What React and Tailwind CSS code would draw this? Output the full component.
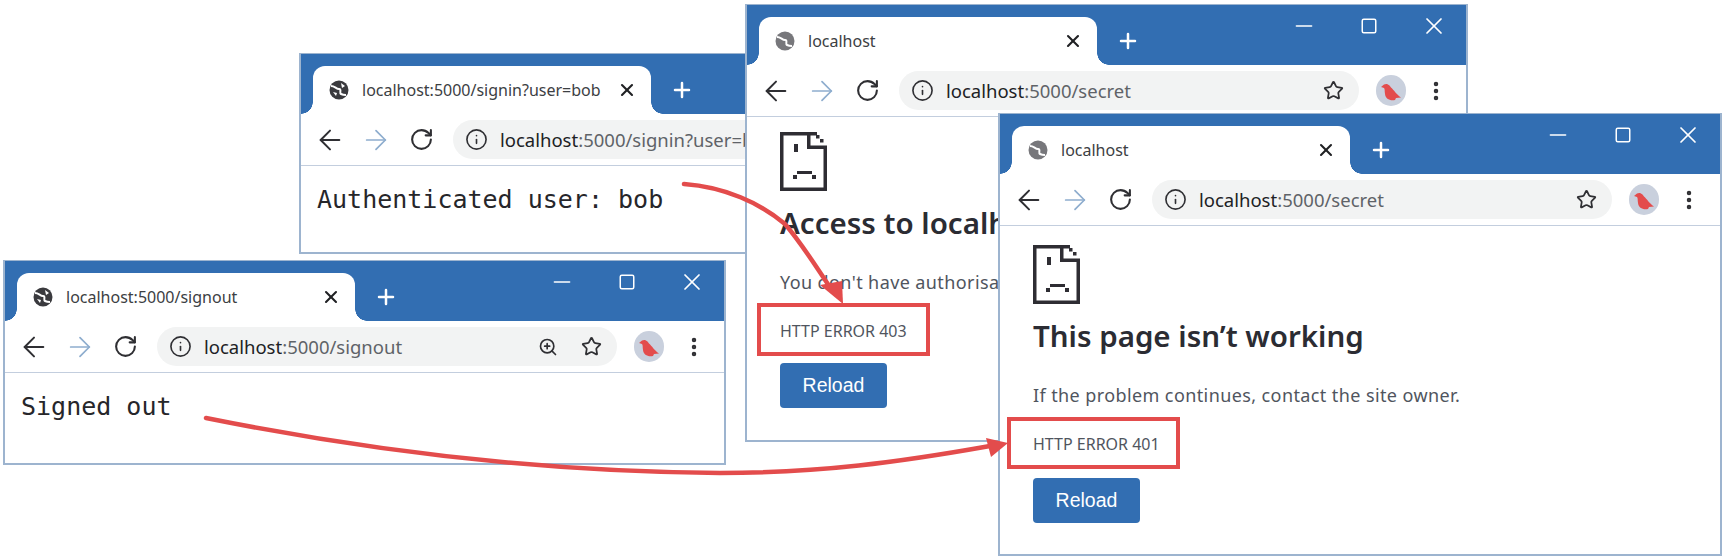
import React from "react";
import { ArrowLeft, ArrowRight, EllipsisVertical, Info, Minus, Plus, RotateCw, Square, Star, X, ZoomIn } from "lucide-react";

// Globe favicon, dark once a page has loaded and grey while it errors
function Globe({ dark }) {
  return (
    <svg width="20" height="20" viewBox="0 0 20 20" className="shrink-0">
      <circle cx="10" cy="10" r="9.5" fill={dark ? "#3a3a3e" : "#77777b"} />
      <path d="M2 6 C6 6 7 9 10 9 C13 9 10 13 12 14 C14 15 15 15 17 15" fill="none" stroke="#fff" strokeWidth="2" />
      {dark && <path d="M12 3 L16 6 L13 8 Z M4 12 L8 13 L7 16 Z" fill="#fff" />}
    </svg>
  );
}

function Avatar() {
  return (
    <div className="ml-[17px] w-[30px] h-[31px] shrink-0 rounded-full bg-[#c9d0dd] flex items-center justify-center">
      <svg width="30" height="31" viewBox="0 0 30 31">
        <path d="M5 12 L8 9.500 C10 8.500 12 9 13.500 10.500 L15 12.500 C18 15 20 19 25 22.500 L20 23 L19 25 C14 26 9.500 24 9 19 C8.500 16 9 14 8 13 Z" fill="#e34c4c" />
      </svg>
    </div>
  );
}

// Pixel style "sad page" that Chrome shows on its error pages
function SadPage() {
  return (
    <svg width="47" height="59" viewBox="0 0 47 59" fill="#2e2d33" className="block">
      <rect x="0" y="0" width="3.500" height="59" />
      <rect x="0" y="0" width="37" height="3.500" />
      <rect x="0" y="55.500" width="47" height="3.500" />
      <rect x="43.500" y="14" width="3.500" height="45" />
      <rect x="27" y="0" width="3.500" height="17" />
      <rect x="27" y="13.500" width="20" height="3.500" />
      <rect x="36" y="3" width="3.500" height="3.500" />
      <rect x="40" y="7" width="3.500" height="3.500" />
      <rect x="14" y="12" width="4" height="8" />
      <rect x="13" y="43" width="4" height="4" />
      <rect x="32" y="43" width="4" height="4" />
      <rect x="17" y="39" width="15" height="3" />
    </svg>
  );
}

function BrowserWindow({ title, url, dark, zoom, className, children }) {
  const [host, ...rest] = url.split(":");
  return (
    <div className={`absolute flex flex-col overflow-hidden bg-white border-x-2 border-b-2 border-t border-[#9db4cf] ${className}`}>
      {/* Tab strip */}
      <div className="h-[60px] shrink-0 bg-[#326eb2] flex items-end pl-[12px]">
        <div className="relative w-[338px] h-[48px] bg-white rounded-t-[12px] flex items-center pl-[16px] pr-[14px]">
          <div className="absolute -left-[12px] bottom-0 w-[12px] h-[12px] bg-[radial-gradient(circle_at_0_0,#326eb2_11.500px,#fff_12px)]" />
          <div className="absolute -right-[12px] bottom-0 w-[12px] h-[12px] bg-[radial-gradient(circle_at_100%_0,#326eb2_11.500px,#fff_12px)]" />
          <Globe dark={dark} />
          <span className="ml-[13px] text-[16px] text-[#3c4043] whitespace-nowrap">{title}</span>
          <X size={20} strokeWidth={2.5} className="ml-auto shrink-0 text-[#202124]" />
        </div>
        <div className="h-[48px] flex items-center ml-[19px]">
          <Plus size={24} strokeWidth={2.5} className="text-white" />
        </div>
        <div className="self-start ml-auto mt-[7px] mr-[18px] flex gap-[37px] text-white">
          <div className="w-[28px] h-[28px] flex items-center justify-center">
            <Minus size={26} strokeWidth={1.500} />
          </div>
          <div className="w-[28px] h-[28px] flex items-center justify-center">
            <Square size={18} strokeWidth={2} />
          </div>
          <div className="w-[28px] h-[28px] flex items-center justify-center">
            <X size={28} strokeWidth={1.500} />
          </div>
        </div>
      </div>
      {/* Toolbar */}
      <div className="h-[52px] shrink-0 flex items-center pl-[13px] border-b border-[#c3cede]">
        <ArrowLeft size={32} strokeWidth={1.500} className="shrink-0 text-[#2f2f33]" />
        <ArrowRight size={32} strokeWidth={1.300} className="ml-[14px] shrink-0 text-[#8eadce]" />
        <RotateCw size={25} strokeWidth={2} className="ml-[16.500px] shrink-0 text-[#2f2f33]" />
        <div className="ml-[19.500px] w-[460px] h-[39px] shrink-0 rounded-full bg-[#f2f3f3] flex items-center pl-[11.500px] pr-[15px]">
          <Info size={23} strokeWidth={1.700} className="shrink-0 text-[#2f2f33]" />
          <span className="ml-[12.500px] text-[18.500px] text-[#5f6368] whitespace-nowrap">
            <span className="text-[#202124]">{host}</span>:{rest.join(":")}
          </span>
          {zoom && <ZoomIn size={20} strokeWidth={2} className="ml-auto shrink-0 text-[#2f2f33]" />}
          <Star size={21} strokeWidth={2} className={`${zoom ? "ml-[23px]" : "ml-auto"} shrink-0 text-[#2f2f33]`} />
        </div>
        <Avatar />
        <EllipsisVertical size={24} strokeWidth={2.500} className="ml-[18px] shrink-0 text-[#2f2f33]" />
      </div>
      {children}
    </div>
  );
}

function MonoPage({ children }) {
  return (
    <p className="pl-[16px] pt-[19px] font-['DejaVu_Sans_Mono',monospace] text-[25px] leading-[30px] text-[#26262a] whitespace-nowrap">
      {children}
    </p>
  );
}

function ErrorPage({ heading, message, code, padTop, boxClass, buttonGap }) {
  return (
    <div className={`pl-[33px] ${padTop}`}>
      <SadPage />
      <h1 className="mt-[12px] text-[29.500px] leading-[40px] font-semibold text-[#2b2c33] whitespace-nowrap">{heading}</h1>
      <p className="mt-[27px] text-[18px] tracking-[0.4px] leading-[24px] text-[#50555e] whitespace-nowrap">{message}</p>
      <div className="relative mt-[27px] w-fit text-[16px] leading-[20px] text-[#50555e] whitespace-nowrap">
        {code}
        <div className={`absolute border-[4px] border-[#e34c4c] ${boxClass}`} />
      </div>
      <button className={`${buttonGap} w-[107px] h-[45px] rounded-[4px] bg-[#326eb2] text-white font-['Liberation_Sans',sans-serif] text-[19.500px]`}>
        Reload
      </button>
    </div>
  );
}

export default function App() {
  return (
    <div className="relative w-[1725px] h-[560px] bg-white overflow-hidden font-['Noto_Sans',sans-serif]">
      <BrowserWindow
        title="localhost:5000/signin?user=bob"
        url="localhost:5000/signin?user=bob"
        dark
        className="left-[299px] top-[53px] w-[723px] h-[201px]"
      >
        <MonoPage>Authenticated user: bob</MonoPage>
      </BrowserWindow>

      <BrowserWindow
        title="localhost:5000/signout"
        url="localhost:5000/signout"
        dark
        zoom
        className="left-[3px] top-[260px] w-[723px] h-[205px]"
      >
        <MonoPage>Signed out</MonoPage>
      </BrowserWindow>

      <BrowserWindow
        title="localhost"
        url="localhost:5000/secret"
        className="left-[745px] top-[4px] w-[723px] h-[438px]"
      >
        <ErrorPage
          heading="Access to localhost was denied"
          message="You don't have authorisation to view this page."
          code="HTTP ERROR 403"
          padTop="pt-[15px]"
          boxClass="-left-[23px] -top-[18px] w-[173px] h-[53px]"
          buttonGap="mt-[22px]"
        />
      </BrowserWindow>

      <BrowserWindow
        title="localhost"
        url="localhost:5000/secret"
        className="left-[998px] top-[113px] w-[724px] h-[443px]"
      >
        <ErrorPage
          heading="This page isn’t working"
          message="If the problem continues, contact the site owner."
          code="HTTP ERROR 401"
          padTop="pt-[19px]"
          boxClass="-left-[26px] -top-[17px] w-[173px] h-[52px]"
          buttonGap="mt-[24px]"
        />
      </BrowserWindow>

      {/* Annotation arrows over the windows */}
      <svg width="1725" height="560" viewBox="0 0 1725 560" className="absolute inset-0 pointer-events-none">
        <path d="M684 184 C725 187 760 203 785 224 C803 245 818 270 832 290" fill="none" stroke="#e34c4c" strokeWidth="4.5" strokeLinecap="round" />
        <polygon points="843,304 820,285 842,281" fill="#e34c4c" />
        <path d="M206 418 C340 445 520 472 720 473 C820 473 900 462 990 446" fill="none" stroke="#e34c4c" strokeWidth="4.5" strokeLinecap="round" />
        <polygon points="1008,443 986,438 991,457" fill="#e34c4c" />
      </svg>
    </div>
  );
}
